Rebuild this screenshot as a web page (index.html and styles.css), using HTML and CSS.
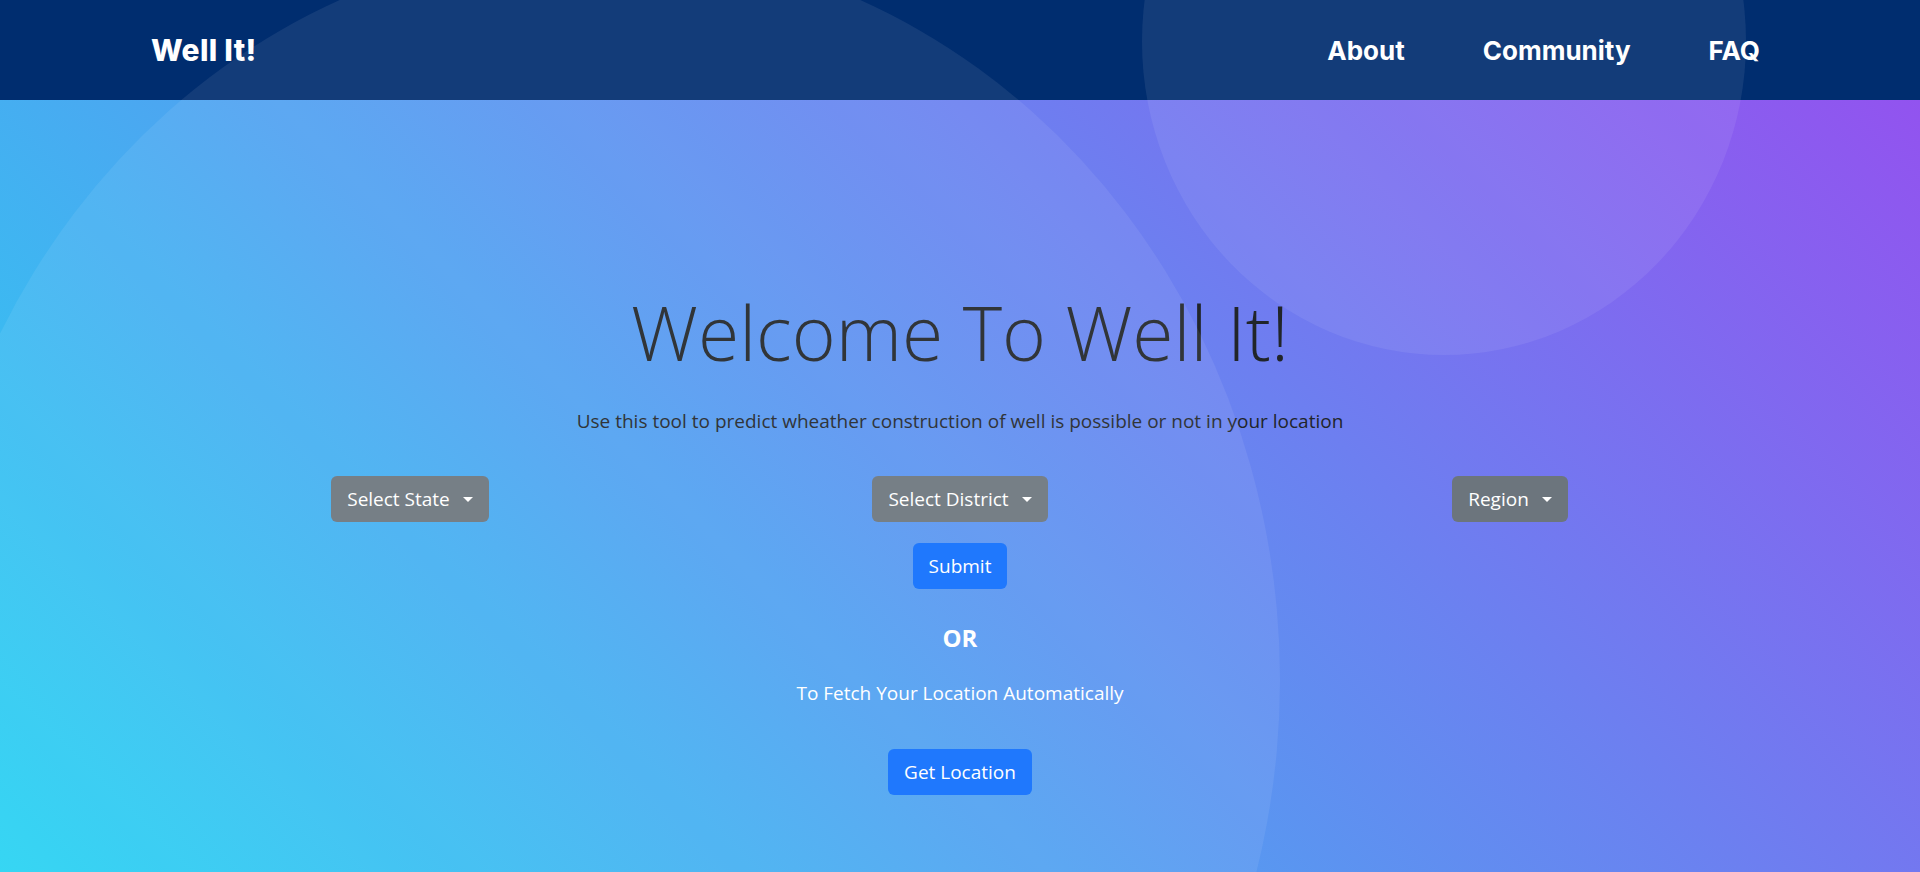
FILE: index.html
```html
<!DOCTYPE html>
<html lang="en">
<head>
<meta charset="utf-8">
<title>Well It!</title>
<link rel="stylesheet" href="styles.css">
</head>
<body>
<div class="page">
  <header class="navbar">
    <a class="brand" href="#">Well It!</a>
    <nav class="nav-links">
      <a href="#">About</a>
      <a href="#">Community</a>
      <a href="#">FAQ</a>
    </nav>
  </header>
  <main class="hero">
    <h1 class="title">Welcome To Well It!</h1>
    <p class="subtitle">Use this tool to predict wheather construction of well is possible or not in your location</p>
    <div class="selects">
      <div class="select-col"><button class="btn btn-secondary">Select State<span class="caret"></span></button></div>
      <div class="select-col"><button class="btn btn-secondary">Select District<span class="caret"></span></button></div>
      <div class="select-col"><button class="btn btn-secondary">Region<span class="caret"></span></button></div>
    </div>
    <button class="btn btn-primary submit">Submit</button>
    <h4 class="or">OR</h4>
    <p class="fetch">To Fetch Your Location Automatically</p>
    <button class="btn btn-primary locate">Get Location</button>
  </main>
  <div class="decor">
    <span class="blob blob-big"></span>
    <span class="blob blob-top"></span>
  </div>
</div>
</body>
</html>
```

FILE: styles.css
```css
* { box-sizing: border-box; }
html, body { margin: 0; padding: 0; height: 100%; }
body {
  font-family: "Open Sans", "Noto Sans", sans-serif;
  color: #212529;
  overflow: hidden;
}
.page {
  position: relative;
  height: 100vh;
  display: flex;
  flex-direction: column;
  overflow: hidden;
}
.navbar {
  height: 100px;
  flex: 0 0 100px;
  background: #002d6f;
  display: flex;
  align-items: center;
  justify-content: space-between;
  padding: 0 160px 0 151px;
}
.brand {
  font-family: "Inter", sans-serif;
  font-weight: 800;
  font-size: 30px;
  color: #fff;
  text-decoration: none;
  letter-spacing: 0.3px;
}
.nav-links {
  display: flex;
  gap: 78px;
}
.nav-links a {
  font-family: "Inter", sans-serif;
  font-weight: 700;
  font-size: 26px;
  color: #fff;
  text-decoration: none;
}
.hero {
  flex: 1;
  background: linear-gradient(45deg, #26d3f2 0%, #9253ef 100%);
  display: flex;
  flex-direction: column;
  align-items: center;
  padding-top: 184px;
}
.title {
  margin: 0;
  font-weight: 300;
  font-size: 75px;
  line-height: 96px;
  color: #212529;
}
.subtitle {
  margin: 28px 0 0;
  font-size: 19px;
  line-height: 26px;
  color: #212529;
}
.selects {
  width: 1650px;
  display: grid;
  grid-template-columns: repeat(3, 1fr);
  justify-items: center;
  margin-top: 42px;
}
.btn {
  font-family: "Open Sans", "Noto Sans", sans-serif;
  font-size: 19px;
  line-height: 30px;
  height: 46px;
  padding: 8px 16px;
  border: 0;
  border-radius: 6px;
  color: #fff;
  display: inline-flex;
  align-items: center;
  cursor: pointer;
}
.btn-secondary { background: #6c757d; }
.btn-primary { background: #0d6efd; }
.caret {
  display: inline-block;
  width: 0;
  height: 0;
  margin-left: 13px;
  border-top: 5px solid #fff;
  border-left: 5px solid transparent;
  border-right: 5px solid transparent;
}
.submit { margin-top: 21px; }
.or {
  margin: 34px 0 0;
  font-size: 24px;
  font-weight: 700;
  line-height: 30px;
  color: #fff;
}
.fetch {
  margin: 27px 0 0;
  font-size: 19px;
  line-height: 26px;
  color: #fff;
}
.locate { margin-top: 43px; }
.decor {
  position: absolute;
  inset: 0;
  pointer-events: none;
  overflow: hidden;
}
.blob {
  position: absolute;
  border-radius: 50%;
  background: rgba(255, 255, 255, 0.075);
}
.blob-big {
  left: -80px;
  top: -56px;
  width: 1360px;
  height: 1472px;
}
.blob-top {
  left: 1142px;
  top: -272px;
  width: 604px;
  height: 627px;
}
```
